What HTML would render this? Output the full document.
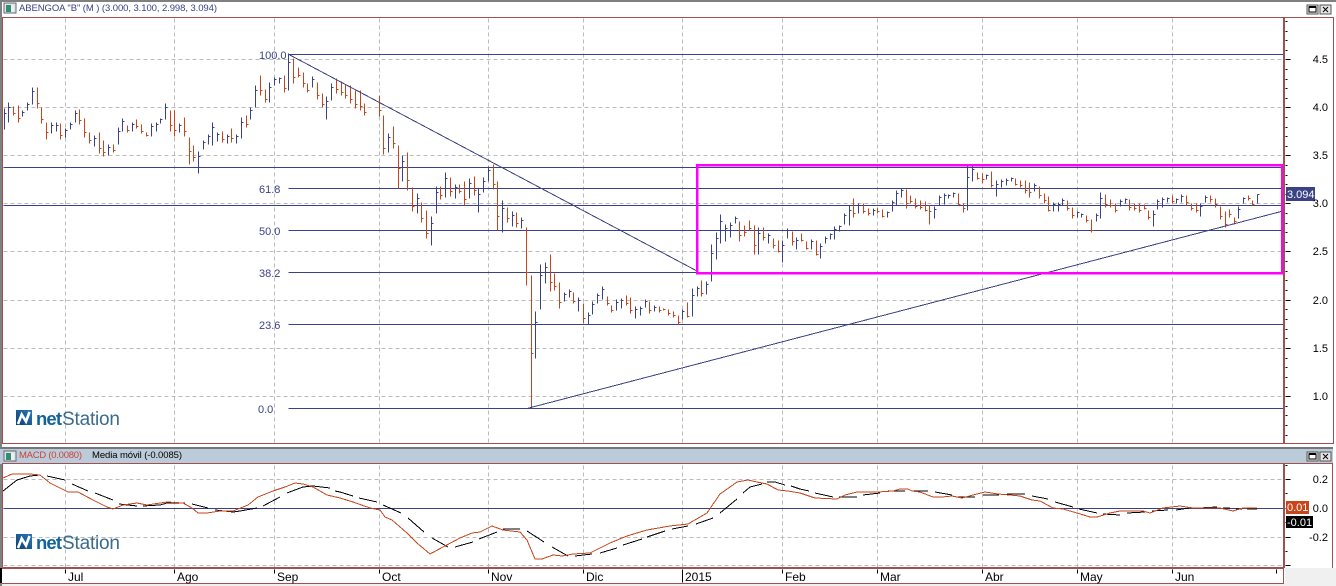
<!DOCTYPE html>
<html><head><meta charset="utf-8"><title>ABENGOA chart</title>
<style>
html,body{margin:0;padding:0;background:#fff;width:1336px;height:586px;overflow:hidden}
svg{display:block}
text{font-family:"Liberation Sans",sans-serif;font-size:11px}
</style></head><body>
<svg width="1336" height="586" viewBox="0 0 1336 586" xmlns="http://www.w3.org/2000/svg">
<defs><linearGradient id="lg" x1="0" y1="1" x2="1" y2="0"><stop offset="0" stop-color="#0c3f73"/><stop offset="1" stop-color="#2a7ab8"/></linearGradient></defs>
<rect width="1336" height="586" fill="#fff"/>
<rect y="583" width="1336" height="3" fill="#f0f0f0"/>
<rect x="1285" y="568" width="51" height="18" fill="#f0f0f0"/>
<rect width="1336" height="2" fill="#808080"/>
<rect width="2" height="586" fill="#808080"/>
<rect y="568" width="2" height="15" fill="#000"/>
<rect y="449" width="1333" height="15" fill="#bccbd9"/>
<rect x="2" y="447" width="1331" height="2" fill="#777"/>

<g shape-rendering="crispEdges" transform="translate(.5 .5)">
<path fill="none" stroke="#bbb" stroke-dasharray="4 3" d="M3 59H1283M3 107H1283M3 155H1283M3 203H1283M3 251H1283M3 300H1283M3 348H1283M3 396H1283M3 479H1283M3 537H1283M3 565H1283M65 18V443M174 18V443M274 18V443M379 18V443M488 18V443M583 18V443M682 18V443M782 18V443M877 18V443M982 18V443M1077 18V443M1172 18V443M65 465V567M174 465V567M274 465V567M379 465V567M488 465V567M583 465V567M682 465V567M782 465V567M877 465V567M982 465V567M1077 465V567M1172 465V567"/>
<path fill="none" stroke="#3a4285" d="M288 54H1283M3 167H1283M288 188H1283M3 205H1283M288 230H1283M288 272H1283M288 324H1283M288 408H1283M3 508H1283"/>
<!-- blue bars -->
<path fill="none" stroke="#3a4285" d="M4 108V129M4 113h2M8 102V122M8 107h2M22 110V116M22 112h2M27 102V110M27 104h2M32 87V104M32 91h2M51 122V133M51 125h2M56 122V131M56 125h2M65 128V137M65 130h2M70 122V129M70 124h2M75 110V122M75 113h2M94 135V146M94 138h2M108 144V155M108 147h2M118 127V144M118 131h2M122 118V131M122 121h2M132 122V131M132 124h2M151 123V136M151 126h2M156 122V131M156 124h2M160 118V123M160 119h2M165 103V119M165 107h2M179 123V132M179 125h2M198 151V173M198 156h2M203 140V149M203 142h2M208 134V144M208 136h2M212 122V145M212 127h2M217 132V141M217 134h2M227 134V143M227 136h2M236 134V143M236 136h2M241 117V138M241 122h2M250 107V119M250 110h2M255 85V107M255 90h2M269 82V102M269 87h2M274 77V85M274 79h2M279 77V83M279 78h2M288 53V90M288 62h2M312 76V87M312 79h2M326 96V119M326 101h2M331 83V100M331 87h2M388 133V152M388 137h2M402 155V181M402 161h2M417 193V213M417 198h2M431 216V245M431 223h2M436 186V213M436 192h2M445 172V197M445 178h2M455 184V198M455 187h2M469 178V198M469 183h2M478 188V212M478 194h2M483 177V192M483 181h2M488 166V181M488 170h2M502 200V232M502 208h2M512 211V226M512 215h2M521 217V228M521 220h2M535 311V358M535 322h2M540 264V309M540 275h2M545 262V283M545 267h2M564 292V301M564 294h2M569 289V297M569 291h2M578 297V311M578 300h2M588 312V324M588 315h2M592 301V314M592 304h2M597 293V303M597 295h2M602 286V299M602 289h2M616 299V310M616 302h2M621 298V308M621 300h2M635 306V318M635 309h2M640 306V315M640 308h2M645 299V307M645 301h2M654 305V311M654 307h2M682 309V319M682 311h2M692 288V316M692 295h2M697 286V296M697 288h2M706 281V294M706 284h2M711 244V281M711 253h2M716 232V259M716 238h2M720 214V243M720 221h2M725 224V241M725 228h2M730 222V237M730 225h2M735 216V223M735 218h2M758 227V254M758 233h2M768 233V243M768 235h2M782 240V262M782 245h2M787 228V238M787 230h2M796 237V249M796 240h2M811 239V249M811 241h2M820 243V258M820 246h2M825 236V243M825 238h2M830 233V239M830 234h2M834 226V239M834 229h2M839 225V231M839 226h2M844 213V224M844 215h2M849 205V225M849 210h2M858 203V213M858 205h2M873 208V215M873 210h2M887 211V217M887 212h2M892 200V211M892 202h2M896 190V205M896 193h2M901 188V197M901 190h2M934 206V218M934 209h2M939 195V205M939 197h2M944 193V204M944 195h2M948 194V198M948 195h2M953 192V197M953 193h2M967 166V210M967 177h2M972 166V181M972 169h2M986 174V179M986 175h2M996 180V196M996 184h2M1001 179V187M1001 181h2M1006 178V185M1006 180h2M1011 177V181M1011 178h2M1034 183V191M1034 185h2M1053 202V211M1053 204h2M1058 202V211M1058 204h2M1062 198V205M1062 200h2M1077 211V217M1077 212h2M1081 213V217M1081 214h2M1096 213V221M1096 215h2M1100 192V218M1100 198h2M1120 199V206M1120 201h2M1125 198V203M1125 199h2M1153 210V226M1153 214h2M1157 199V209M1157 201h2M1162 197V207M1162 199h2M1167 197V202M1167 198h2M1176 198V203M1176 199h2M1181 194V202M1181 196h2M1200 203V216M1200 206h2M1205 195V202M1205 197h2M1238 206V218M1238 209h2M1243 197V203M1243 198h2M1257 194V203M1257 194h2"/>
<!-- red bars -->
<path fill="none" stroke="#c8441a" d="M13 106V115M13 113h2M18 105V122M18 118h2M37 87V108M37 103h2M41 107V123M41 119h2M46 122V139M46 132h2M60 123V139M60 135h2M79 109V124M79 120h2M84 118V137M84 132h2M89 132V143M89 140h2M99 132V153M99 148h2M103 140V156M103 152h2M113 144V152M113 150h2M127 125V132M127 130h2M136 119V128M136 126h2M141 124V133M141 131h2M146 132V136M146 135h2M170 110V131M170 125h2M174 110V136M174 130h2M184 117V136M184 131h2M189 137V164M189 151h2M193 145V161M193 157h2M222 131V142M222 139h2M231 128V142M231 138h2M246 115V127M246 124h2M260 75V95M260 90h2M265 89V102M265 99h2M284 75V92M284 88h2M293 58V83M293 77h2M298 67V77M298 75h2M303 72V87M303 83h2M307 83V92M307 90h2M317 82V99M317 95h2M322 93V107M322 104h2M336 78V93M336 89h2M341 81V95M341 92h2M345 84V98M345 95h2M350 85V103M350 99h2M355 90V108M355 104h2M360 90V110M360 106h2M364 103V115M364 112h2M379 95V116M379 110h2M383 115V154M383 148h2M393 126V148M393 143h2M398 145V188M398 168h2M407 152V190M407 180h2M412 187V211M412 206h2M421 202V222M421 218h2M426 210V238M426 233h2M440 186V199M440 195h2M450 177V196M450 191h2M459 184V193M459 191h2M464 181V205M464 199h2M474 176V195M474 190h2M493 164V189M493 184h2M497 181V230M497 216h2M507 207V222M507 218h2M516 212V227M516 223h2M526 227V285M526 272h2M531 275V408M531 353h2M550 254V291M550 282h2M554 273V290M554 286h2M559 282V308M559 302h2M573 292V303M573 301h2M583 303V323M583 318h2M607 296V305M607 303h2M611 305V312M611 310h2M626 295V305M626 303h2M630 297V313M630 310h2M649 301V313M649 310h2M659 306V312M659 310h2M663 308V310M663 309h2M668 309V315M668 313h2M673 311V317M673 315h2M678 315V324M678 322h2M687 302V317M687 316h2M701 280V296M701 293h2M739 221V241M739 235h2M744 225V236M744 232h2M749 220V230M749 228h2M754 225V254M754 245h2M763 227V240M763 237h2M773 238V248M773 245h2M778 240V252M778 251h2M792 231V245M792 241h2M801 233V241M801 240h2M806 241V249M806 248h2M816 240V255M816 254h2M853 198V217M853 213h2M863 203V213M863 211h2M868 208V215M868 213h2M877 207V213M877 211h2M882 209V217M882 216h2M906 189V208M906 203h2M910 195V203M910 201h2M915 198V208M915 206h2M920 200V209M920 207h2M925 201V211M925 210h2M929 205V224M929 211h2M958 193V205M958 204h2M963 203V212M963 208h2M977 172V179M977 178h2M982 173V183M982 179h2M991 171V187M991 185h2M1015 178V185M1015 184h2M1020 180V187M1020 185h2M1025 180V193M1025 190h2M1029 182V197M1029 192h2M1039 186V198M1039 195h2M1044 193V203M1044 200h2M1048 196V211M1048 210h2M1067 200V210M1067 208h2M1072 207V218M1072 215h2M1086 215V222M1086 220h2M1091 219V232M1091 230h2M1105 194V207M1105 204h2M1110 199V207M1110 205h2M1115 203V212M1115 210h2M1129 199V210M1129 207h2M1134 203V210M1134 208h2M1139 203V212M1139 210h2M1144 204V209M1144 208h2M1148 210V219M1148 217h2M1172 195V203M1172 201h2M1186 195V205M1186 202h2M1191 203V210M1191 208h2M1196 203V212M1196 210h2M1210 195V202M1210 199h2M1215 198V207M1215 204h2M1220 206V219M1220 216h2M1225 211V227M1225 224h2M1229 209V217M1229 214h2M1234 217V224M1234 221h2M1248 195V200M1248 198h2M1252 200V205M1252 204h2"/>
</g>

<!-- trend lines -->
<path fill="none" stroke="#3a4285" stroke-width="1" shape-rendering="crispEdges" d="M288 54L697 271M527 408.5L1283 211"/>
<rect x="697" y="165" width="585" height="108" fill="none" stroke="#ff00ff" stroke-width="2.5" shape-rendering="crispEdges"/>

<!-- MACD -->
<path fill="none" stroke="#000" stroke-width="1" shape-rendering="crispEdges" d="M3 491L17 480L30 476L40 475M47 476L65 480M72 484L88 491M95 493L113 500M119 504L137 506M143 506L160 505L167 503L185 503M192 504L208 508M215 510L233 512L240 511L257 508M263 506L280 497M287 493L303 487L313 486L330 488M335 491L340 492L353 496M359 498L377 502M383 505L401 513M408 518L424 532M432 538L448 547M455 547L473 542M479 539L497 532M503 529L520 529M527 531L544 542M552 547L568 556M575 556L592 554M600 553L617 548M623 545L642 539M647 537L665 531M672 529L688 526M696 524L713 518M720 513L737 499M743 493L750 487L762 484M767 482L775 482L785 485M791 486L800 489L809 491M815 493L833 497M839 497L857 497M863 495L880 493M888 491L905 491M912 491L928 491M935 492L952 495M958 497L975 497M983 495L999 495M1007 494L1025 494M1032 496L1048 499M1055 502L1073 507M1079 509L1097 513M1103 514L1120 515M1127 513L1145 512M1152 511L1168 510M1176 510L1189 508M1199 508L1217 507M1223 508L1230 508M1236 509L1242 509M1247 509L1257 509"/>
<path fill="none" stroke="#c8441a" stroke-width="1" shape-rendering="crispEdges" d="M3 478L12 474L30 474L40 475L50 483L68 492L78 492L93 500L107 507L113 509L123 505L137 503L147 505L167 502L183 503L192 508L198 513L207 513L220 511L233 511L248 505L258 497L273 491L285 487L295 483L303 484L313 487L327 495L340 498L353 502L370 508L380 510L385 517L392 520L407 533L417 543L430 554L443 547L460 538L472 533L480 532L492 526L503 530L520 532L527 540L535 559L542 559L553 555L562 556L573 554L590 553L598 549L610 543L627 536L647 530L670 526L688 524L707 513L720 494L730 487L737 482L748 480L757 482L767 484L778 490L788 491L800 493L815 498L837 499L845 495L857 492L878 492L893 491L900 489L908 489L912 491L920 492L933 497L942 497L952 496L962 498L973 495L985 492L998 494L1010 495L1020 496L1032 500L1040 501L1053 508L1063 509L1077 513L1090 517L1097 517L1110 513L1120 511L1143 511L1150 513L1163 508L1180 506L1193 508L1220 508L1233 511L1243 508L1257 508"/>

<!-- frames -->
<g shape-rendering="crispEdges" fill="#a05050">
<rect x="2" y="17" width="1332" height="1"/>
<rect x="2" y="17" width="1" height="427"/>
<rect x="1283" y="17" width="2" height="427"/>
<rect x="1333" y="17" width="1" height="427"/>
<rect x="2" y="443" width="1332" height="1"/>
<rect x="2" y="463" width="1331" height="1"/>
<rect x="2" y="463" width="1" height="105"/>
<rect x="1283" y="463" width="2" height="105"/>
<rect x="1332" y="463" width="1" height="105"/>
<rect x="2" y="567" width="1282" height="2"/>
<rect x="1283" y="568" width="1" height="15"/>
<rect x="2" y="583" width="1282" height="1"/>
</g>

<!-- ticks -->
<g shape-rendering="crispEdges" transform="translate(.5 .5)" stroke="#000" fill="none">
<path d="M1285 21h2M1285 31h2M1285 40h2M1285 50h2M1285 59h5M1285 69h2M1285 79h2M1285 88h2M1285 98h2M1285 107h5M1285 117h2M1285 127h2M1285 136h2M1285 146h2M1285 155h5M1285 165h2M1285 175h2M1285 184h2M1285 194h2M1285 203h5M1285 213h2M1285 223h2M1285 232h2M1285 242h2M1285 251h5M1285 261h2M1285 271h2M1285 280h2M1285 290h2M1285 300h5M1285 309h2M1285 319h2M1285 329h2M1285 338h2M1285 348h5M1285 358h2M1285 367h2M1285 377h2M1285 387h2M1285 396h5M1285 406h2M1285 415h2M1285 425h2M1285 435h2M1285 465h2M1285 479h5M1285 493h2M1285 508h5M1285 522h2M1285 537h5M1285 551h2M1285 565h5"/>
<path d="M65 569v4M174 569v4M274 569v4M379 569v4M488 569v4M583 569v4M682 569v13M782 569v4M877 569v4M982 569v4M1077 569v4M1172 569v4M1276 569v4"/>
</g>

<!-- badges -->
<rect x="1286" y="187" width="29" height="14" fill="#3a4285"/>
<rect x="1286" y="501" width="23" height="13" fill="#c8441a"/>
<rect x="1286" y="516" width="27" height="12" fill="#000"/>

<!-- title bars -->
<g shape-rendering="crispEdges">
<rect x="4" y="3" width="12" height="10" fill="#dfe5e5" stroke="#667" stroke-width=".6"/>
<rect x="6" y="5" width="5" height="7" fill="#2f8f70"/>
<rect x="11" y="5" width="3" height="7" fill="#eee"/>
<rect x="4" y="451" width="12" height="10" fill="#dfe5e5" stroke="#667" stroke-width=".6"/>
<rect x="6" y="453" width="5" height="7" fill="#2f8f70"/>
<rect x="11" y="453" width="3" height="7" fill="#eee"/>

<rect x="1307" y="5" width="11" height="9" fill="#e4e4e4" stroke="#555" stroke-width=".7"/>
<rect x="1309" y="7" width="7" height="5" fill="#fff" stroke="#000"/>
<rect x="1309" y="6" width="7" height="2" fill="#000"/>
<rect x="1320" y="5" width="11" height="9" fill="#e4e4e4" stroke="#555" stroke-width=".7"/>
<rect x="1307" y="452" width="11" height="9" fill="#e4e4e4" stroke="#555" stroke-width=".7"/>
<rect x="1309" y="454" width="7" height="5" fill="#fff" stroke="#000"/>
<rect x="1309" y="453" width="7" height="2" fill="#000"/>
<rect x="1320" y="452" width="11" height="9" fill="#e4e4e4" stroke="#555" stroke-width=".7"/>
</g>
<path stroke="#000" fill="none" d="M1323 7l5 5M1328 7l-5 5M1323 454l5 5M1328 454l-5 5"/>

<text x="19" y="11" fill="#3a4285" style="font-size:9.5px" textLength="198">ABENGOA "B" (M ) (3.000, 3.100, 2.998, 3.094)</text>
<text x="19" y="458" fill="#c8443a" style="font-size:9.5px" textLength="63">MACD (0.0080)</text>
<text x="92" y="458" fill="#000" style="font-size:9.5px" textLength="90">Media móvil (-0.0085)</text>

<!-- fib labels -->
<g fill="#3a4285">
<text x="259" y="59">100.0</text>
<text x="259" y="193">61.8</text>
<text x="259" y="235">50.0</text>
<text x="259" y="277">38.2</text>
<text x="259" y="329">23.6</text>
<text x="258" y="413">0.0</text>
</g>

<!-- price labels -->
<g fill="#000" text-anchor="end">
<text x="1328" y="63">4.5</text>
<text x="1328" y="111">4.0</text>
<text x="1328" y="159">3.5</text>
<text x="1328" y="207">3.0</text>
<text x="1328" y="255">2.5</text>
<text x="1328" y="304">2.0</text>
<text x="1328" y="352">1.5</text>
<text x="1328" y="400">1.0</text>
<text x="1328" y="483">0.2</text>
<text x="1328" y="512">0.0</text>
<text x="1328" y="541">-0.2</text>
</g>
<text x="1287" y="198" fill="#fff">3.094</text>
<text x="1287" y="511" fill="#fff">0.01</text>
<text x="1287" y="526" fill="#fff">-0.01</text>

<!-- time labels -->
<g fill="#000">
<text x="68" y="581" style="font-size:12px">Jul</text>
<text x="177" y="581" style="font-size:12px">Ago</text>
<text x="277" y="581" style="font-size:12px">Sep</text>
<text x="382" y="581" style="font-size:12px">Oct</text>
<text x="491" y="581" style="font-size:12px">Nov</text>
<text x="586" y="581" style="font-size:12px">Dic</text>
<text x="685" y="581" style="font-size:12px">2015</text>
<text x="785" y="581" style="font-size:12px">Feb</text>
<text x="880" y="581" style="font-size:12px">Mar</text>
<text x="985" y="581" style="font-size:12px">Abr</text>
<text x="1080" y="581" style="font-size:12px">May</text>
<text x="1175" y="581" style="font-size:12px">Jun</text>
</g>

<!-- logos -->
<g>
<rect x="16" y="410" width="16" height="15" fill="url(#lg)"/>
<path d="M18 424L21.7 414.5L26 421.5L29.5 412" fill="none" stroke="#fff" stroke-width="2.6"/>
<text x="36" y="425" fill="#0f64a0" style="font-size:18.5px;font-weight:bold" textLength="26">net</text>
<text x="62" y="425" fill="#3a6a8c" style="font-size:19px" textLength="58">Station</text>
</g>
<g>
<rect x="16" y="534" width="16" height="15" fill="url(#lg)"/>
<path d="M18 548L21.7 538.5L26 545.5L29.5 536" fill="none" stroke="#fff" stroke-width="2.6"/>
<text x="36" y="549" fill="#0f64a0" style="font-size:18.5px;font-weight:bold" textLength="26">net</text>
<text x="62" y="549" fill="#3a6a8c" style="font-size:19px" textLength="58">Station</text>
</g>
</svg>
</body></html>
